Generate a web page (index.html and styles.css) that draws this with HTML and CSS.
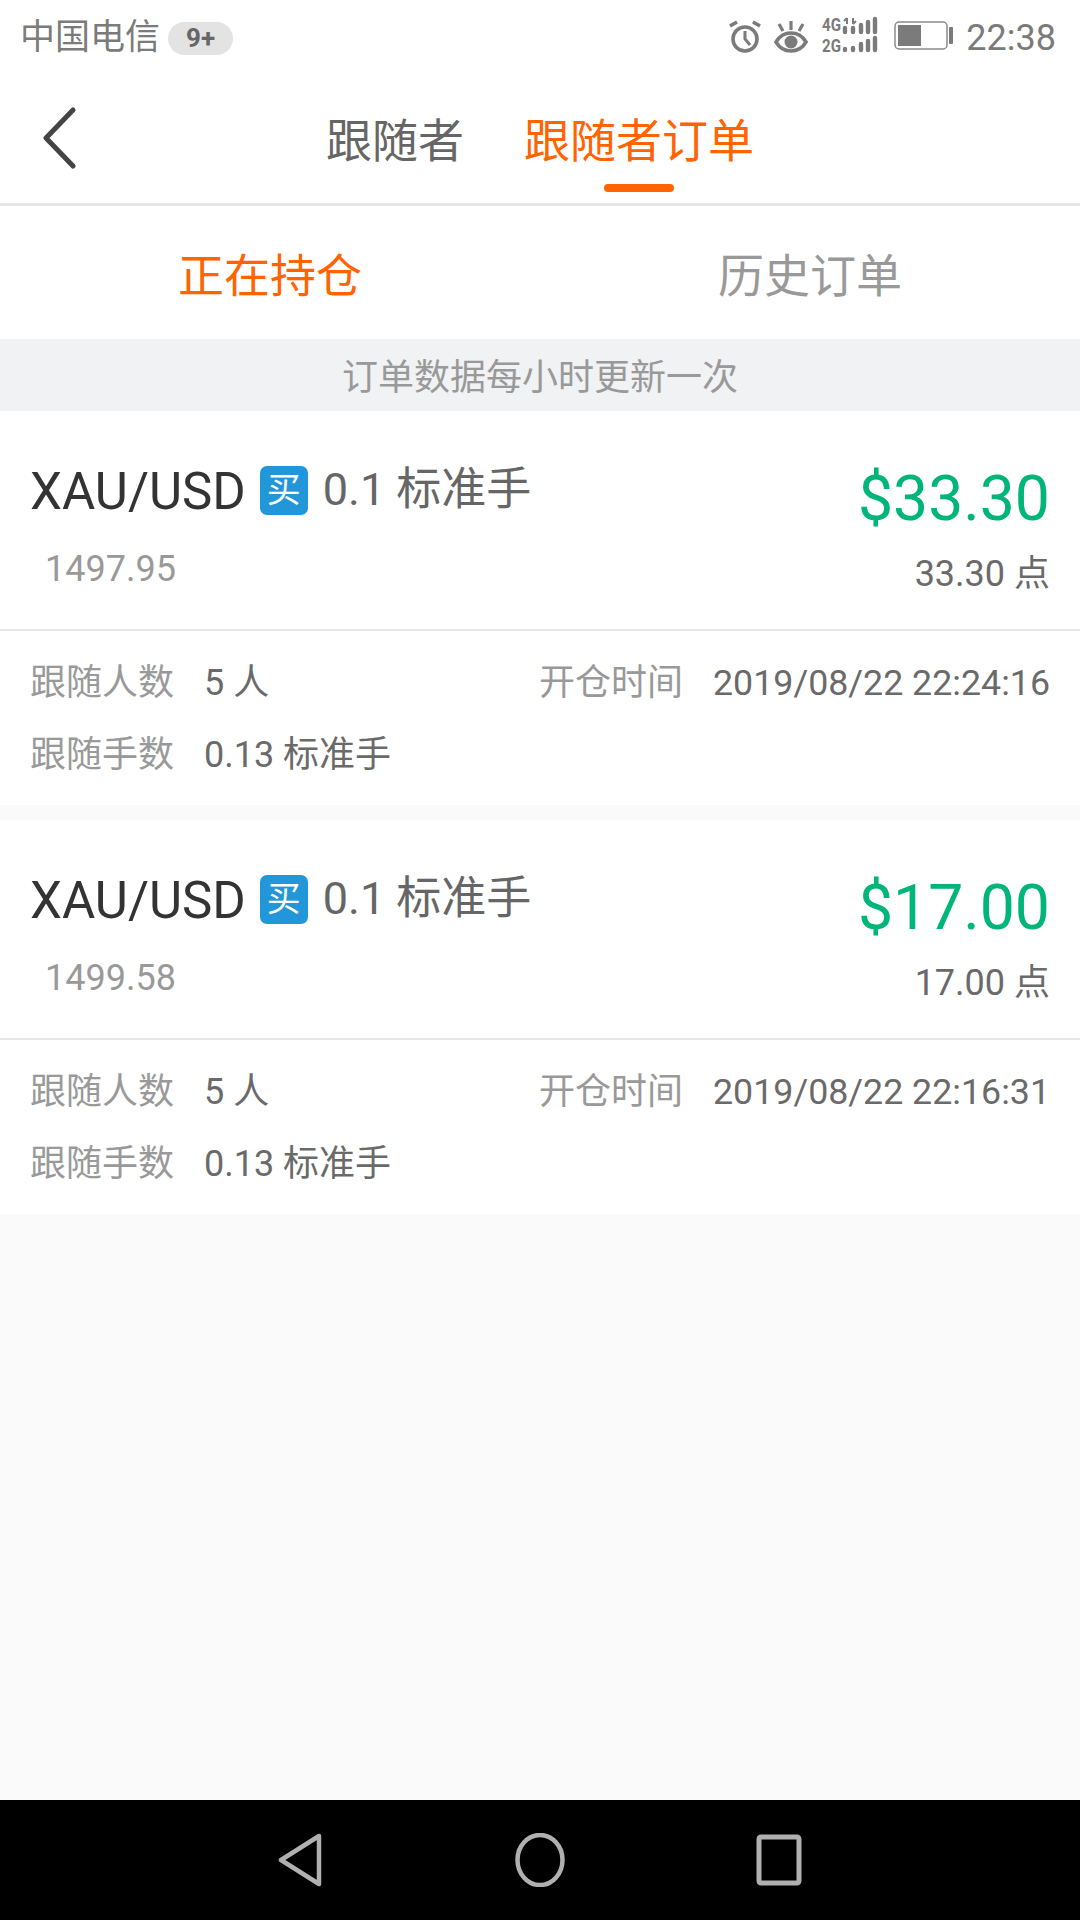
FILE: index.html
```html
<!DOCTYPE html>
<html lang="zh-CN">
<head>
    <meta charset="UTF-8">
    <title>跟随者订单</title>
    <link rel="stylesheet" href="styles.css">
</head>
<body>
    <div class="screen">
        <div class="status-bar">
            <div class="status-left">
                <span class="carrier">中国电信</span>
                <span class="notify-badge">9+</span>
            </div>
            <div class="status-right">
                <svg class="icon-alarm" width="34" height="34" viewBox="0 0 34 34">
                    <circle cx="17" cy="20" r="12" fill="none" stroke="#7b7b7b" stroke-width="3.6"/>
                    <path d="M17 12v8l5 6" fill="none" stroke="#7b7b7b" stroke-width="3"/>
                    <path d="M2 7l7-4M32 7l-7-4" fill="none" stroke="#7b7b7b" stroke-width="3.6"/>
                </svg>
                <svg class="icon-eye" width="34" height="34" viewBox="0 0 34 34">
                    <path d="M2 23C9 11 25 11 32 23C25 35 9 35 2 23z" fill="none" stroke="#7b7b7b" stroke-width="3.6"/>
                    <circle cx="17" cy="23" r="6.5" fill="#7b7b7b"/>
                    <path d="M17 2v9M5 5l4 7M29 5l-4 7" fill="none" stroke="#7b7b7b" stroke-width="3.2"/>
                </svg>
                <svg class="icon-signal" width="58" height="48" viewBox="0 -5 58 48">
                    <text class="net-label" x="1" y="14" textLength="19" lengthAdjust="spacingAndGlyphs">4G</text>
                    <text class="net-label" x="1" y="35" textLength="19" lengthAdjust="spacingAndGlyphs">2G</text>
                    <path d="M26 1v6M23 4l3-3M32 1v6M35 4l-3 3" fill="none" stroke="#7b7b7b" stroke-width="2"/>
                    <path d="M24 15V11M32 15V11M40 15V8M47 15V5M54 15V2" fill="none" stroke="#7b7b7b" stroke-width="4.4" stroke-linecap="round"/>
                    <path d="M24 33V32M32 33V31M40 33V27M47 33V24M54 33V21" fill="none" stroke="#7b7b7b" stroke-width="4.4" stroke-linecap="round"/>
                </svg>
                <svg class="icon-battery" width="60" height="30" viewBox="0 0 60 30">
                    <rect x="1" y="1" width="52" height="27" rx="4" fill="none" stroke="#8a8a8a" stroke-width="1.5"/>
                    <rect x="4" y="4" width="23" height="21" fill="#7b7b7b"/>
                    <rect x="55" y="6" width="4" height="17" rx="1" fill="#7b7b7b"/>
                </svg>
                <span class="clock">22:38</span>
            </div>
        </div>

        <div class="header">
            <svg class="back-icon" width="36" height="62" viewBox="0 0 36 62">
                <path d="M32 3L5 31l27 28" fill="none" stroke="#444" stroke-width="5" stroke-linecap="round" stroke-linejoin="round"/>
            </svg>
            <div class="header-tabs">
                <span class="header-tab">跟随者</span>
                <span class="header-tab header-tab-active">跟随者订单</span>
            </div>
        </div>

        <div class="sub-tabs">
            <span class="sub-tab sub-tab-active">正在持仓</span>
            <span class="sub-tab">历史订单</span>
        </div>

        <div class="notice">订单数据每小时更新一次</div>

        <div class="order">
            <div class="order-top">
                <div class="order-info">
                    <div class="order-title">
                        <span class="symbol">XAU/USD</span>
                        <span class="buy-tag">买</span>
                        <span class="lots">0.1 标准手</span>
                    </div>
                    <div class="open-price">1497.95</div>
                </div>
                <div class="order-profit">
                    <div class="profit-money">$33.30</div>
                    <div class="profit-points">33.30 点</div>
                </div>
            </div>
            <div class="order-bottom">
                <div class="detail-row">
                    <span class="detail-label">跟随人数</span>
                    <span class="detail-value">5 人</span>
                    <span class="detail-label detail-right">开仓时间</span>
                    <span class="detail-value detail-date">2019/08/22 22:24:16</span>
                </div>
                <div class="detail-row">
                    <span class="detail-label">跟随手数</span>
                    <span class="detail-value">0.13 标准手</span>
                </div>
            </div>
        </div>

        <div class="order">
            <div class="order-top">
                <div class="order-info">
                    <div class="order-title">
                        <span class="symbol">XAU/USD</span>
                        <span class="buy-tag">买</span>
                        <span class="lots">0.1 标准手</span>
                    </div>
                    <div class="open-price">1499.58</div>
                </div>
                <div class="order-profit">
                    <div class="profit-money">$17.00</div>
                    <div class="profit-points">17.00 点</div>
                </div>
            </div>
            <div class="order-bottom">
                <div class="detail-row">
                    <span class="detail-label">跟随人数</span>
                    <span class="detail-value">5 人</span>
                    <span class="detail-label detail-right">开仓时间</span>
                    <span class="detail-value detail-date">2019/08/22 22:16:31</span>
                </div>
                <div class="detail-row">
                    <span class="detail-label">跟随手数</span>
                    <span class="detail-value">0.13 标准手</span>
                </div>
            </div>
        </div>

        <div class="spacer"></div>

        <div class="nav-bar">
            <svg width="46" height="54" viewBox="0 0 46 54">
                <path d="M41 3L3 27l38 24z" fill="none" stroke="#b0b0b0" stroke-width="4.5" stroke-linejoin="round"/>
            </svg>
            <svg width="50" height="54" viewBox="0 0 50 54">
                <ellipse cx="25" cy="27" rx="22.5" ry="25" fill="none" stroke="#b0b0b0" stroke-width="4.5"/>
            </svg>
            <svg width="46" height="54" viewBox="0 0 46 54">
                <rect x="3" y="4" width="40" height="46" rx="2" fill="none" stroke="#b0b0b0" stroke-width="5"/>
            </svg>
        </div>
    </div>
</body>
</html>
```

FILE: styles.css
```css
* {
    box-sizing: border-box;
}
body {
    margin: 0;
    font-family: 'Roboto', 'Noto Sans CJK SC', sans-serif;
    background-color: #fafafa;
}
.screen {
    width: 1080px;
    height: 1920px;
    display: flex;
    flex-direction: column;
    overflow: hidden;
}
.status-bar {
    height: 76px;
    background-color: #fff;
    display: flex;
    justify-content: space-between;
    align-items: center;
    padding: 0 24px 0 20px;
    color: #7b7b7b;
}
.status-left {
    display: flex;
    align-items: center;
    gap: 8px;
}
.carrier {
    font-size: 35px;
    line-height: 40px;
}
.notify-badge {
    width: 65px;
    height: 33px;
    border-radius: 17px;
    background-color: #e3e3e3;
    color: #666;
    font-size: 26px;
    font-weight: 700;
    line-height: 33px;
    text-align: center;
}
.status-right {
    display: flex;
    align-items: center;
}
.status-right svg {
    margin-bottom: 4px;
}
.icon-alarm {
    margin-right: 12px;
}
.icon-eye {
    margin-right: 13px;
}
.icon-signal {
    margin-right: 15px;
}
.icon-battery {
    margin-right: 12px;
}
.net-label {
    font-family: 'Roboto', sans-serif;
    font-size: 17.5px;
    font-weight: 700;
    fill: #7b7b7b;
}
.clock {
    font-size: 36px;
    line-height: 40px;
}
.header {
    position: relative;
    height: 130px;
    background-color: #fff;
    border-bottom: 3px solid #e6e6ea;
    display: flex;
    justify-content: center;
}
.back-icon {
    position: absolute;
    left: 41px;
    top: 31px;
}
.header-tabs {
    display: flex;
    gap: 60px;
}
.header-tab {
    position: relative;
    font-size: 46px;
    line-height: 60px;
    padding-top: 35px;
    color: #666;
}
.header-tab-active {
    color: #ff6400;
}
.header-tab-active::after {
    content: "";
    position: absolute;
    left: 50%;
    bottom: 11px;
    width: 70px;
    height: 8px;
    margin-left: -35px;
    border-radius: 4px;
    background-color: #ff6400;
}
.sub-tabs {
    height: 133px;
    padding-top: 5px;
    background-color: #fff;
    display: flex;
}
.sub-tab {
    flex: 1;
    font-size: 46px;
    line-height: 130px;
    text-align: center;
    color: #999;
}
.sub-tab-active {
    color: #ff6400;
}
.notice {
    height: 72px;
    padding-top: 3px;
    background-color: #f1f2f4;
    color: #999;
    font-size: 36px;
    line-height: 72px;
    text-align: center;
}
.order {
    background-color: #fff;
    margin-bottom: 15px;
}
.order-top {
    height: 220px;
    padding: 0 30px;
    display: flex;
    justify-content: space-between;
    border-bottom: 2px solid #e6e6ea;
}
.order-title {
    display: flex;
    align-items: center;
    padding-top: 51px;
}
.symbol {
    font-size: 51px;
    line-height: 60px;
    color: #333;
}
.buy-tag {
    width: 48px;
    height: 49px;
    margin: 0 15px 3px 14px;
    border-radius: 7px;
    background-color: #2196d9;
    color: #fff;
    font-size: 34px;
    line-height: 49px;
    text-align: center;
}
.lots {
    font-size: 45px;
    line-height: 60px;
    color: #666;
    position: relative;
    top: -2px;
}
.open-price {
    margin: 25px 0 0 15px;
    font-size: 36px;
    line-height: 44px;
    color: #999;
}
.order-profit {
    text-align: right;
    padding-top: 51px;
}
.profit-money {
    font-size: 62.5px;
    line-height: 74px;
    color: #00b578;
}
.profit-points {
    margin-top: 16px;
    font-size: 36px;
    line-height: 44px;
    color: #6a6a6a;
}
.order-bottom {
    height: 174px;
    padding: 22px 30px 0;
}
.detail-row {
    display: flex;
    align-items: baseline;
    height: 44px;
    margin-bottom: 28px;
    font-size: 36px;
}
.detail-label {
    width: 174px;
    color: #999;
}
.detail-value {
    color: #6a6a6a;
    white-space: nowrap;
}
.detail-date {
    font-size: 35.75px;
}
.detail-right {
    width: auto;
    margin-left: auto;
    margin-right: 30px;
}
.spacer {
    flex: 1;
}
.nav-bar {
    height: 120px;
    background-color: #000;
    display: flex;
    justify-content: center;
    align-items: center;
    gap: 191px;
}
```
